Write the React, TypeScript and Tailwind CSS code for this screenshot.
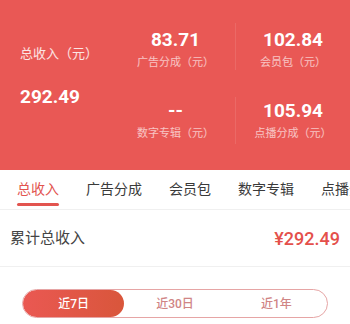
import React from 'react';

const font = { fontFamily: 'Roboto, "Noto Sans CJK SC", sans-serif' };

const tabs = ['总收入', '广告分成', '会员包', '数字专辑', '点播分成'];

function Stat({ value, label, top, divider }: { value: string; label: string; top: string; divider?: boolean }) {
  return (
    <div className={`flex h-[47px] flex-col items-center ${top} ${divider ? 'border-l border-white/10' : ''}`}>
      <div className="text-[19px] font-bold leading-none text-white">{value}</div>
      <div className="mt-[8px] text-[11px] leading-none text-white/65">{label}</div>
    </div>
  );
}

export default function App() {
  const [tab, setTab] = React.useState(0);
  const [range, setRange] = React.useState(0);

  return (
    <div className="h-[324px] w-[350px] overflow-hidden bg-white" style={font}>
      {/* header */}
      <div className="flex h-[170px] bg-[#e95855]">
        <div className="flex w-[116px] flex-col pl-[20px] pt-[47px]">
          <div className="text-[13px] leading-none text-white/85">总收入（元）</div>
          <div className="mt-[27px] text-[19px] font-bold leading-none text-white">292.49</div>
        </div>
        <div className="grid flex-1 grid-cols-[119px_115px] grid-rows-[47px_47px] gap-y-[27px] pt-[23px]">
          <Stat value="83.71" label="广告分成（元）" top="pt-[7px]" />
          <Stat value="102.84" label="会员包（元）" top="pt-[7px]" divider />
          <Stat value="--" label="数字专辑（元）" top="pt-[4px]" />
          <Stat value="105.94" label="点播分成（元）" top="pt-[4px]" divider />
        </div>
      </div>

      {/* tabs */}
      <div className="flex h-[40px] gap-[27px] overflow-hidden whitespace-nowrap border-b border-[#f0f0f0] pl-[17px] pt-[12px]">
        {tabs.map((t, i) => (
          <button key={t} onClick={() => setTab(i)} className="flex shrink-0 flex-col">
            <span className={`text-[14px] leading-none ${tab === i ? 'text-[#e2544f]' : 'text-[#3a3a3a]'}`}>{t}</span>
            <span className={`mt-[7px] h-[3px] w-full rounded-full ${tab === i ? 'bg-[#e2544f]' : 'bg-transparent'}`} />
          </button>
        ))}
      </div>

      {/* total row */}
      <div className="flex h-[57px] items-center justify-between border-b border-[#f0f0f0] px-[10px]">
        <span className="text-[15px] text-[#444444]">累计总收入</span>
        <span className="text-[18px] font-medium text-[#e4504b]">¥292.49</span>
      </div>

      {/* range switch */}
      <div className="mx-[22px] mt-[22px] flex h-[29px] overflow-hidden rounded-full border-[1.5px] border-[#e6a5a5]">
        {['近7日', '近30日', '近1年'].map((r, i) => (
          <button
            key={r}
            onClick={() => setRange(i)}
            className={`flex w-1/3 items-center justify-center rounded-full text-[12px] font-medium ${
              range === i ? 'bg-gradient-to-r from-[#ea5852] to-[#d9563b] text-white' : 'text-[#d08585]'
            }`}
          >
            {r}
          </button>
        ))}
      </div>
    </div>
  );
}
